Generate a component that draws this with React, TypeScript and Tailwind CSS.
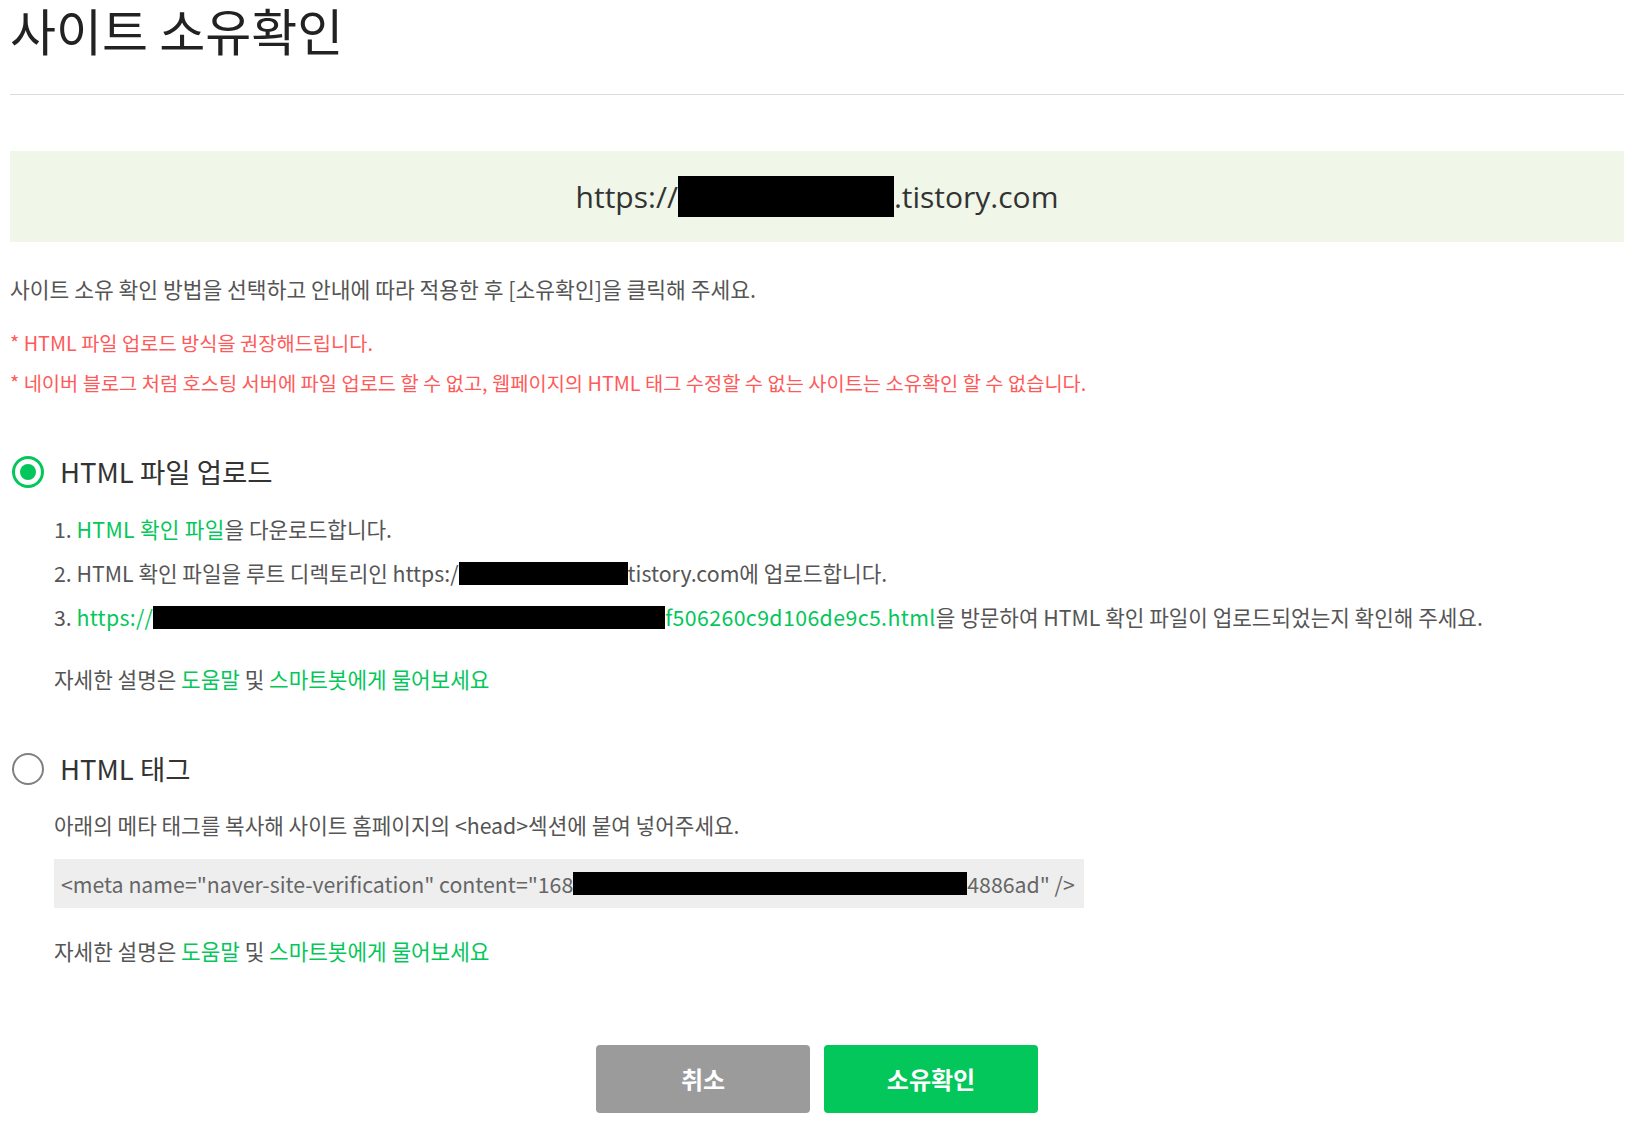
import React from "react";

const font = { fontFamily: '"Noto Sans CJK KR", "Noto Sans", sans-serif' };

function Redact({ w, h = 23 }: { w: number; h?: number }) {
  return <span className="inline-block shrink-0 bg-black align-middle" style={{ width: w, height: h }} />;
}

export default function App() {
  return (
    <div className="w-[1636px] h-[1123px] bg-white px-[10px] text-[#555]" style={font}>
      <h1 className="text-[50px] leading-[58px] font-normal text-[#222]">사이트 소유확인</h1>
      <div className="mt-[36px] border-t border-[#dcdcdc] w-[1614px]" />
      <div className="mt-[56px] w-[1614px] h-[91px] bg-[#f0f6e8] flex items-center justify-center">
        <span className="text-[30px] text-[#333] flex items-center" style={{ fontFamily: '"Open Sans", sans-serif' }}>
          https://<span className="inline-block bg-black w-[216px] h-[41px]" />.tistory.com
        </span>
      </div>
      <p className="mt-[32px] text-[21.5px] leading-[30px] text-[#555]">
        사이트 소유 확인 방법을 선택하고 안내에 따라 적용한 후 [소유확인]을 클릭해 주세요.
      </p>
      <div className="mt-[24px] text-[19.8px] leading-[30px] text-[#ff5a5a] flex flex-col gap-[10px]">
        <p>* HTML 파일 업로드 방식을 권장해드립니다.</p>
        <p>* 네이버 블로그 처럼 호스팅 서버에 파일 업로드 할 수 없고, 웹페이지의 HTML 태그 수정할 수 없는 사이트는 소유확인 할 수 없습니다.</p>
      </div>

      <div className="mt-[56px] ml-[2px] flex items-center gap-[16px] h-[36px]">
        <span className="w-[32px] h-[32px] rounded-full border-[3px] border-[#03c75a] flex items-center justify-center">
          <span className="w-[16px] h-[16px] rounded-full bg-[#03c75a]" />
        </span>
        <span className="text-[27.5px] text-[#333]">HTML 파일 업로드</span>
      </div>
      <div className="pl-[44px] mt-[24px] text-[21.3px] leading-[30px] flex flex-col gap-[14px] whitespace-nowrap">
        <p>
          1. <span className="text-[#03c75a] tracking-[0.3px]">HTML 확인 파일</span>을 다운로드합니다.
        </p>
        <p className="flex items-center">
          <span>2. HTML 확인 파일을 루트 디렉토리인 https:/</span>
          <Redact w={169} />
          <span>tistory.com에 업로드합니다.</span>
        </p>
        <p className="flex items-center">
          <span>3.&nbsp;</span>
          <span className="text-[#03c75a] tracking-[0.3px]">https://</span>
          <Redact w={512} />
          <span className="text-[#03c75a] tracking-[0.4px]">f506260c9d106de9c5.html</span>
          <span>을 방문하여 HTML 확인 파일이 업로드되었는지 확인해 주세요.</span>
        </p>
        <p className="mt-[18px]">
          자세한 설명은 <span className="text-[#03c75a]">도움말</span> 및{" "}
          <span className="text-[#03c75a]">스마트봇에게 물어보세요</span>
        </p>
      </div>

      <div className="mt-[57px] ml-[2px] flex items-center gap-[16px] h-[36px]">
        <span className="w-[32px] h-[32px] rounded-full border-[2px] border-[#808080]" />
        <span className="text-[27.5px] text-[#333]">HTML 태그</span>
      </div>
      <div className="pl-[44px] mt-[23px] text-[21.3px] leading-[30px] whitespace-nowrap">
        <p>아래의 메타 태그를 복사해 사이트 홈페이지의 &lt;head&gt;섹션에 붙여 넣어주세요.</p>
        <div className="mt-[19px] w-[1030px] h-[49px] bg-[#eeeeee] flex items-center pl-[7px] text-[#666]">
          <span className="shrink-0">&lt;meta name="naver-site-verification" content="168</span>
          <Redact w={394} />
          <span className="shrink-0">4886ad" /&gt;</span>
        </div>
        <p className="mt-[28px]">
          자세한 설명은 <span className="text-[#03c75a]">도움말</span> 및{" "}
          <span className="text-[#03c75a]">스마트봇에게 물어보세요</span>
        </p>
      </div>

      <div className="mt-[79px] flex justify-center gap-[14px] w-[1614px]">
        <button className="w-[214px] h-[68px] rounded-[4px] bg-[#9b9b9b] text-white text-[24px] font-bold">취소</button>
        <button className="w-[214px] h-[68px] rounded-[4px] bg-[#03c75a] text-white text-[24px] font-bold">소유확인</button>
      </div>
    </div>
  );
}
